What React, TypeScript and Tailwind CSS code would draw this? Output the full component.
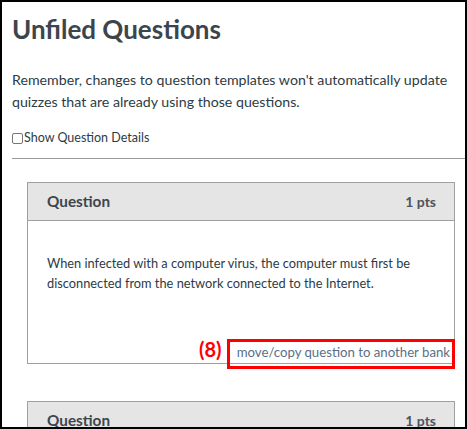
export default function App() {
  return (
    <div className="w-[467px] h-[429px] overflow-hidden border-2 border-black bg-white font-['Lato','Liberation_Sans',sans-serif] text-[#3d454c]">
      <div className="pl-[10px] pt-[11px]">
        <h1 className="text-[26px] leading-[32px] font-bold">Unfiled Questions</h1>
        <p className="mt-[24px] text-[14.2px] leading-[22px] text-[#2d3b45]">
          Remember, changes to question templates won't automatically update quizzes that are already using those questions.
        </p>
        <label className="mt-[16px] flex items-center text-[12.5px] leading-[18px] text-[#2d3b45]">
          <span className="inline-block w-[11px] h-[11px] border border-[#777] rounded-[2px] bg-white mr-px" />
          Show Question Details
        </label>
        <div className="mt-[11px] border-t border-[#9a9a9a]" />

        <div className="relative mt-[23px] ml-[15px] w-[428px] border border-[#a0a0a0]">
          <div className="flex items-center justify-between h-[38px] pl-[19px] pr-[18px] bg-[#e5e5e5] border-b border-[#a0a0a0]">
            <span className="text-[15.3px] font-bold">Question</span>
            <span className="text-[14px] font-bold text-[#4d545b]">1 pts</span>
          </div>
          <div className="h-[142px] px-[19px] pt-[33px] flex flex-col">
            <p className="text-[12.8px] leading-[19.5px] text-[#2d3b45]">
              When infected with a computer virus, the computer must first be disconnected from the network connected to the Internet.
            </p>
            <div className="mt-auto mb-[3px] self-end -mr-[15px]">
              <span className="block text-[13.2px] leading-[16px] text-[#56708a]">move/copy question to another bank</span>
            </div>
          </div>
          <div className="absolute left-[199px] top-[156px] w-[228px] h-[30px] border-[3px] border-[#ff0000]" />
          <span className="absolute left-[171px] top-[154px] text-[20px] leading-[24px] font-bold text-[#ff0000]">(8)</span>
        </div>

        <div className="mt-[37px] ml-[15px] w-[428px] border border-[#a0a0a0]">
          <div className="flex items-center justify-between h-[38px] pl-[19px] pr-[18px] bg-[#e5e5e5] border-b border-[#a0a0a0]">
            <span className="text-[15.3px] font-bold">Question</span>
            <span className="text-[14px] font-bold text-[#4d545b]">1 pts</span>
          </div>
        </div>
      </div>
    </div>
  );
}
